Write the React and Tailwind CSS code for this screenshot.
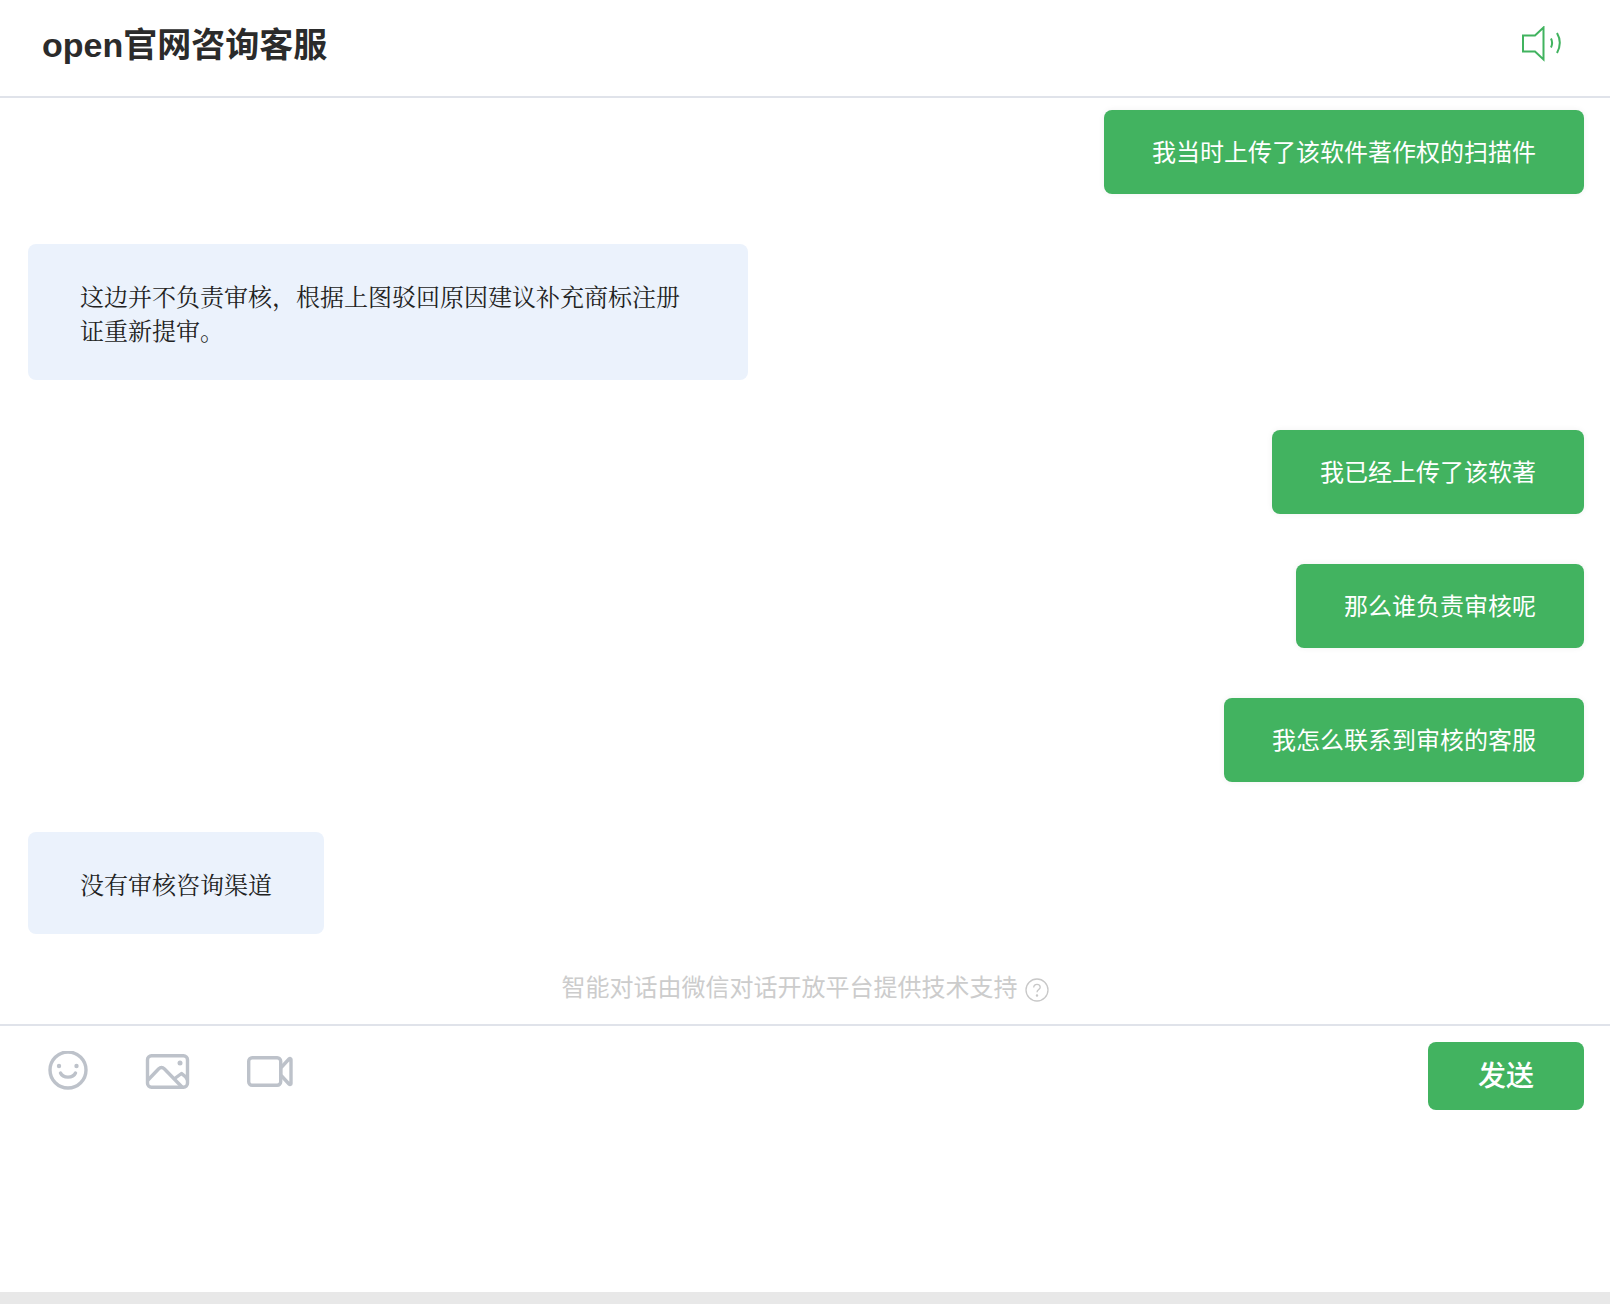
const sans = "font-['Liberation_Sans','Noto_Sans_CJK_SC',sans-serif]";

function Green({ children }) {
  return (
    <div className="flex justify-end pr-[26px]">
      <div className="h-[84px] rounded-[8px] bg-[#42b360] px-[48px] text-[24px] leading-[85px] text-white shadow-[0_0_6px_rgba(0,0,0,0.06)]">
        {children}
      </div>
    </div>
  );
}

function Blue({ children, className }) {
  return (
    <div className="flex justify-start pl-[28px]">
      <div className={"rounded-[8px] bg-[#ebf2fc] pt-[37px] pr-[52px] pb-[31px] pl-[52px] font-['Liberation_Serif','Noto_Serif_CJK_SC','Noto_Sans_CJK_SC',serif] text-[24px] leading-[34px] text-[#222] " + className}>
        {children}
      </div>
    </div>
  );
}

export default function App() {
  return (
    <div className={"flex h-[1304px] w-[1610px] flex-col overflow-hidden bg-white " + sans}>
      <header className="flex h-[98px] shrink-0 items-center justify-between border-b-2 border-[#e0e3ea] pr-[48px] pl-[42px]">
        <h1 className="pb-[6px] text-[34px] leading-[44px] font-bold text-[#2b2b2b]">open官网咨询客服</h1>
        <svg width="40" height="36" viewBox="0 0 40 36" fill="none" stroke="#41b35f" strokeWidth="2" className="mb-[8px]">
          <path d="M1 9.5H13L21.5 1.5V33.5L13 25.5H1Z" strokeLinejoin="miter" />
          <path d="M29 12.5C30.5 15.5 30.5 18.5 29 21.5" />
          <path d="M35 7C38.5 13 38.5 20.5 35 27" />
        </svg>
      </header>

      <main className="flex flex-1 flex-col gap-[50px] pt-[12px]">
        <Green>我当时上传了该软件著作权的扫描件</Green>
        <Blue className="w-[720px]">
          这边并不负责审核，根据上图驳回原因建议补充商标注册证重新提审。
        </Blue>
        <Green>我已经上传了该软著</Green>
        <Green>那么谁负责审核呢</Green>
        <Green>我怎么联系到审核的客服</Green>
        <Blue className="w-[296px]">没有审核咨询渠道</Blue>
      </main>

      <div className="flex h-[90px] shrink-0 items-start justify-center pt-[37px] text-[24px] leading-[34px] text-[#cccccc]">
        智能对话由微信对话开放平台提供技术支持
        <svg width="24" height="24" viewBox="0 0 24 24" fill="none" stroke="#c8c8c8" strokeWidth="1.3" className="mt-[7px] ml-[7px]">
          <circle cx="12" cy="12" r="11" />
          <path d="M8.7 9.5C8.7 7.5 10.2 6.3 12 6.3C13.8 6.3 15.2 7.5 15.2 9.2C15.2 11.4 12 11.8 12 14.3" />
          <circle cx="12" cy="17.5" r="0.6" />
        </svg>
      </div>

      <footer className="flex h-[268px] shrink-0 items-start justify-between border-t-2 border-[#e0e3ea] pt-[16px] pr-[26px] pl-[47px]">
        <div className="flex items-start pt-[9px]">
          <svg width="42" height="40" viewBox="0 0 42 40" fill="none" stroke="#bdc2ca" strokeWidth="3.4" strokeLinecap="round">
            <circle cx="21" cy="19" r="18" />
            <path d="M13.5 22C16 27.5 26 27.5 28.5 22" />
            <circle cx="12" cy="15" r="2.2" fill="#bdc2ca" stroke="none" />
            <circle cx="29.5" cy="15" r="2.2" fill="#bdc2ca" stroke="none" />
          </svg>
          <svg width="46" height="36" viewBox="0 0 46 36" fill="none" stroke="#bdc2ca" strokeWidth="3.4" strokeLinejoin="round" className="mt-[3px] ml-[56px]">
            <rect x="2.5" y="1.7" width="40" height="31.6" rx="4" />
            <path d="M3 26L13.5 15C15.5 13 17.5 13 19.5 15L37 33" />
            <path d="M29 25L36.5 19.5C39 21 41 23 42.5 26" />
            <circle cx="35" cy="9" r="2.5" fill="#bdc2ca" stroke="none" />
          </svg>
          <svg width="46" height="32" viewBox="0 0 46 32" fill="none" stroke="#bdc2ca" strokeWidth="3.4" strokeLinejoin="round" className="mt-[5px] ml-[56px]">
            <rect x="1.7" y="1.7" width="32" height="27.6" rx="3.5" />
            <path d="M33.7 12L42 3C43 2 44 2.5 44 3.5V27.5C44 28.5 43 29 42 28L33.7 19Z" />
          </svg>
        </div>
        <button className="h-[68px] w-[156px] rounded-[8px] bg-[#42b360] pt-[2px] text-[28px] font-medium text-white">发送</button>
      </footer>

      <div className="h-[12px] shrink-0 bg-[#e8e8e8]" />
    </div>
  );
}
